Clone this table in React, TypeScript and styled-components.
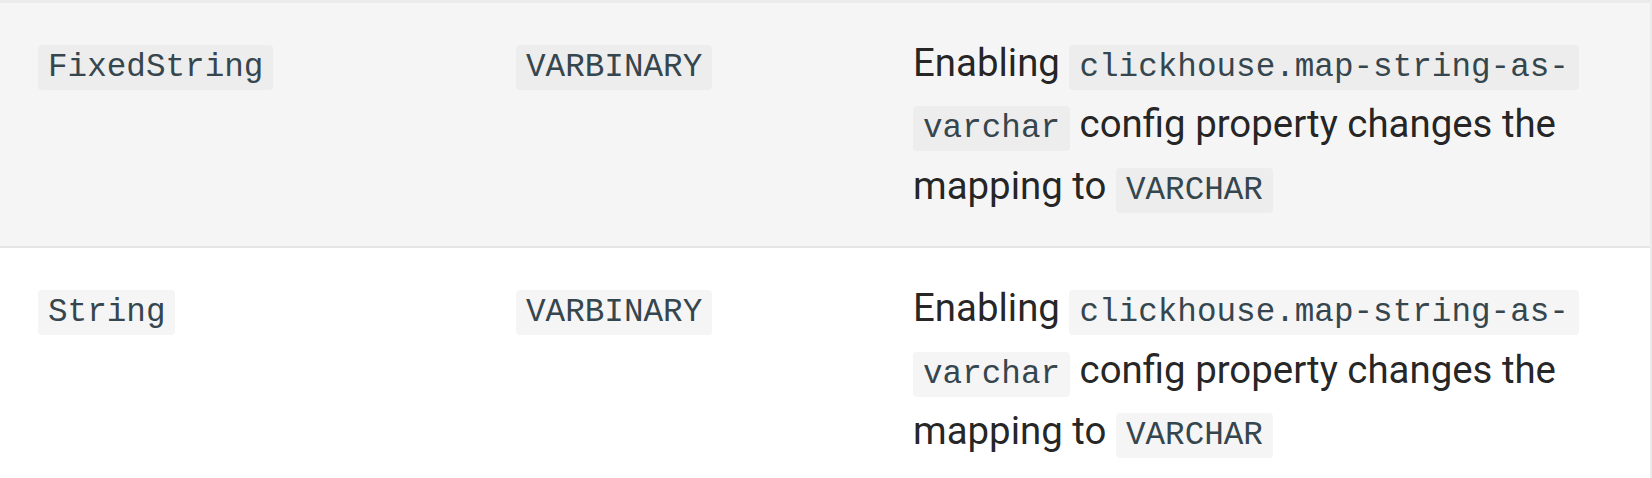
import React from 'react';
import styled, { createGlobalStyle } from 'styled-components';

const GlobalStyle = createGlobalStyle`
  html, body {
    margin: 0;
    padding: 0;
    background: #ffffff;
  }
  body {
    font-family: Roboto, "Noto Sans", "Liberation Sans", sans-serif;
    -webkit-font-smoothing: antialiased;
  }
`;

const Table = styled.div`
  width: 1652px;
  border-top: 3px solid #ebebeb;
  border-right: 2px solid #ebebeb;
  box-sizing: border-box;
`;

const Row = styled.div<{ $shaded?: boolean }>`
  display: grid;
  grid-template-columns: 478px 397px 1fr;
  background: ${(p) => (p.$shaded ? '#f5f5f5' : '#ffffff')};
  & + & {
    border-top: 2px solid #e6e6e6;
  }
`;

const Cell = styled.div`
  padding: 29px 38px 30px 38px;
  font-size: 38.4px;
  line-height: 61.4px;
  color: rgba(0, 0, 0, 0.87);
`;

const Code = styled.code<{ $onShade?: boolean }>`
  font-family: "Liberation Mono", "DejaVu Sans Mono", monospace;
  font-size: 32.64px;
  line-height: 1;
  color: #36464e;
  background: ${(p) => (p.$onShade ? '#ededed' : '#f5f5f5')};
  border-radius: 4px;
  padding: 4px 10px 4px 10px;
  -webkit-box-decoration-break: clone;
  box-decoration-break: clone;
  word-break: normal;
`;

type Mapping = {
  source: string;
  target: string;
};

const rows: Mapping[] = [
  { source: 'FixedString', target: 'VARBINARY' },
  { source: 'String', target: 'VARBINARY' },
];

const App = () => {
  return (
    <>
      <GlobalStyle />
      <Table>
        {rows.map((r, i) => {
          const shaded = i % 2 === 0;
          return (
            <Row key={r.source} $shaded={shaded}>
              <Cell>
                <Code $onShade={shaded}>{r.source}</Code>
              </Cell>
              <Cell>
                <Code $onShade={shaded}>{r.target}</Code>
              </Cell>
              <Cell>
                Enabling <Code $onShade={shaded}>clickhouse.map-string-as-varchar</Code> config
                property changes the mapping to <Code $onShade={shaded}>VARCHAR</Code>
              </Cell>
            </Row>
          );
        })}
      </Table>
    </>
  );
};

export default App;
